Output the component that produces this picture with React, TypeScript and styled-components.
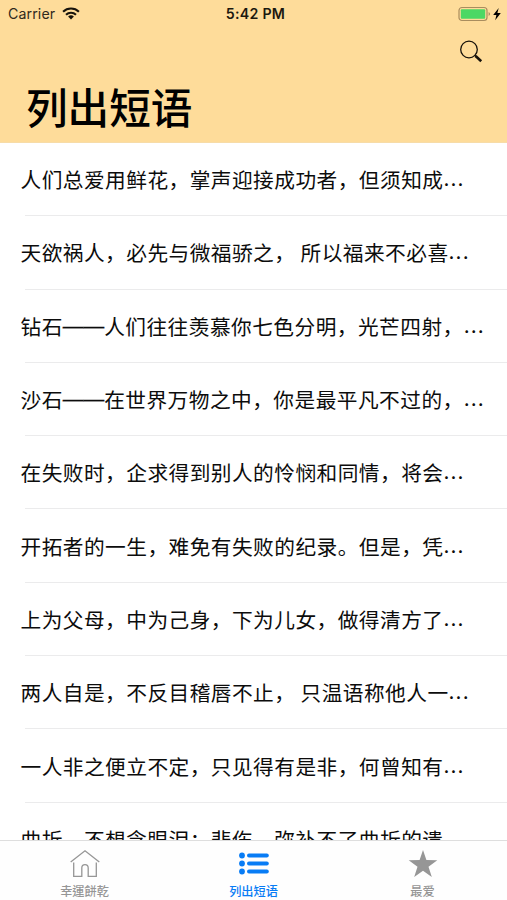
import React from 'react';
import styled, { createGlobalStyle } from 'styled-components';

const GlobalStyle = createGlobalStyle`
  * { box-sizing: border-box; }
  body {
    margin: 0;
    background: #fff;
    color: #000;
    font-family: Inter, "Noto Sans CJK SC", sans-serif;
  }
`;

const Screen = styled.div`
  display: flex;
  flex-direction: column;
  width: 507px;
  height: 900px;
  overflow: hidden;
`;

const Header = styled.header`
  flex: none;
  height: 143px;
  background: #fedc9a;
  border-bottom: 1px solid #f7dca8;
`;

const StatusBar = styled.div`
  display: grid;
  grid-template-columns: 1fr auto 1fr;
  align-items: center;
  height: 27px;
  padding: 0 4px 0 8px;
`;

const Carrier = styled.div`
  display: flex;
  align-items: center;
  gap: 7px;
  color: #30291c;
  font-size: 14.2px;
  letter-spacing: 0.1px;
`;

const Clock = styled.div`
  color: #1c180f;
  font-size: 14.2px;
  font-weight: 600;
  letter-spacing: 0.25px;
`;

const Battery = styled.div`
  display: flex;
  justify-content: flex-end;
  padding-right: 1px;
`;

const NavBar = styled.div`
  display: flex;
  justify-content: flex-end;
  height: 50px;
  padding: 13px 24px 0 0;
`;

const Title = styled.h1`
  margin: 0;
  padding-left: 26px;
  font-family: "Noto Sans CJK SC", sans-serif;
  font-size: 41.6px;
  font-weight: 500;
  line-height: 59px;
`;

const List = styled.ul`
  flex: 1;
  min-height: 0;
  margin: 0;
  padding: 0;
  overflow: hidden;
  list-style: none;
`;

const Row = styled.li`
  display: flex;
  align-items: center;
  height: 73.3px;
  padding: 0 0 1px 20.5px;
  background: linear-gradient(#ebebec, #ebebec) 25px 100% / 100% 1px no-repeat;
  color: #0c0c0c;
  font-family: "Noto Sans CJK SC", sans-serif;
  font-size: 20.7px;
  letter-spacing: 0.46px;
  line-height: 30px;
  white-space: pre;
`;

const Dash = styled.span`
  font-family: "Liberation Sans", sans-serif;
  letter-spacing: 0;
  line-height: 0;
  vertical-align: 2px;
  -webkit-text-stroke: 0.3px currentColor;
`;

const Ellipsis = styled.span`
  font-family: Inter, sans-serif;
  letter-spacing: 1.1px;
`;

const TabBar = styled.nav`
  flex: none;
  display: grid;
  grid-template-columns: repeat(3, 1fr);
  height: 60px;
  border-top: 1px solid #dedede;
  background: #fefefe;
`;

const Tab = styled.button<{ $active?: boolean }>`
  display: flex;
  flex-direction: column;
  align-items: center;
  padding: 7px 0 0;
  border: 0;
  background: none;
  color: ${(p) => (p.$active ? '#087cf5' : '#969696')};
`;

const TabLabel = styled.span<{ $traditional?: boolean }>`
  margin-top: 4px;
  font-family: ${(p) => (p.$traditional ? '"Noto Sans CJK TC"' : '"Noto Sans CJK SC"')}, sans-serif;
  font-size: 12.2px;
  font-weight: 500;
  line-height: 18px;
`;

const WifiIcon = () => (
  <svg width="18" height="13" viewBox="0 0 18 13" fill="none" stroke="#17130c" strokeWidth="2.1">
    <path d="M1.1 4.7C5.5.5 12.5.5 16.9 4.7" />
    <path d="M4 7.7C6.8 5 11.2 5 14 7.7" />
    <path d="M9 12.5 6.1 9.6Q9 7.1 11.9 9.6Z" fill="#17130c" stroke="none" />
  </svg>
);

const BatteryIcon = () => (
  <svg width="44" height="16" viewBox="0 0 44 16">
    <rect x="1" y="1.5" width="28" height="13" rx="3" fill="none" stroke="#a98d5e" strokeWidth="1.2" />
    <rect x="2.8" y="3.3" width="24.4" height="9.4" rx="1" fill="#4bd864" />
    <path d="M30.6 6Q33.6 8 30.6 10Z" fill="#a98d5e" />
    <path d="M40.7 2 35.2 9h3.2l-1.2 5.3 5.6-7.3h-3.4Z" fill="#000" />
  </svg>
);

const SearchIcon = () => (
  <svg width="24" height="24" viewBox="0 0 24 24" fill="none" stroke="#17120a">
    <circle cx="10" cy="9.5" r="8.3" strokeWidth="1.3" />
    <path d="m15.8 15.3 1.5 1.5" strokeWidth="1.5" />
    <path d="m16.6 16 5.6 5.2" strokeWidth="2.6" />
  </svg>
);

const HomeIcon = () => (
  <svg width="30" height="30" viewBox="0 0 30 30" fill="none" stroke="currentColor" strokeWidth="1.3">
    <path d="M.7 13.9 15 2.8l14.3 11.1" />
    <path d="M3.7 14.5v13.8h8.1v-8.4a3.2 3.2 0 0 1 6.4 0v8.4h8.1V14.5" />
  </svg>
);

const ListIcon = () => (
  <svg width="30" height="30" viewBox="0 0 30 30" fill="currentColor">
    {[7.5, 15.5, 23.5].map((y) => (
      <g key={y}>
        <circle cx="3" cy={y} r="2.9" />
        <rect x="8" y={y - 2} width="21.8" height="4" rx="2" />
      </g>
    ))}
  </svg>
);

const StarIcon = () => (
  <svg width="30" height="30" viewBox="0 0 30 30" fill="currentColor">
    <path d="m15 2 3.4 10.1 10.9.1-8.8 6.5 3.3 10.3L15 22.7 6.2 29l3.3-10.3L.7 12.2l10.9-.1Z" />
  </svg>
);

const phrases = [
  '人们总爱用鲜花，掌声迎接成功者，但须知成',
  '天欲祸人，必先与微福骄之， 所以福来不必喜',
  '钻石——人们往往羡慕你七色分明，光芒四射，',
  '沙石——在世界万物之中，你是最平凡不过的，',
  '在失败时，企求得到别人的怜悯和同情，将会',
  '开拓者的一生，难免有失败的纪录。但是，凭',
  '上为父母，中为己身，下为儿女，做得清方了',
  '两人自是，不反目稽唇不止， 只温语称他人一',
  '一人非之便立不定，只见得有是非，何曾知有',
  '曲折，不想念眼泪；悲伤，弥补不了曲折的遗',
];

// The double dash is set without tracking so that its two halves join.
const Phrase = ({ text }: { text: string }) => {
  const [head, tail] = text.split('——');
  if (tail === undefined) return <span>{text}</span>;
  return (
    <span>
      {head}
      <Dash>——</Dash>
      {tail}
    </span>
  );
};

export default function App() {
  return (
    <Screen lang="zh-CN">
      <GlobalStyle />
      <Header>
        <StatusBar>
          <Carrier>
            Carrier
            <WifiIcon />
          </Carrier>
          <Clock>5:42 PM</Clock>
          <Battery>
            <BatteryIcon />
          </Battery>
        </StatusBar>
        <NavBar>
          <SearchIcon />
        </NavBar>
        <Title>列出短语</Title>
      </Header>
      <List>
        {phrases.map((text) => (
          <Row key={text}>
            <Phrase text={text} />
            <Ellipsis>...</Ellipsis>
          </Row>
        ))}
      </List>
      <TabBar>
        <Tab>
          <HomeIcon />
          <TabLabel $traditional lang="zh-TW">幸運餅乾</TabLabel>
        </Tab>
        <Tab $active>
          <ListIcon />
          <TabLabel>列出短语</TabLabel>
        </Tab>
        <Tab>
          <StarIcon />
          <TabLabel>最爱</TabLabel>
        </Tab>
      </TabBar>
    </Screen>
  );
}
